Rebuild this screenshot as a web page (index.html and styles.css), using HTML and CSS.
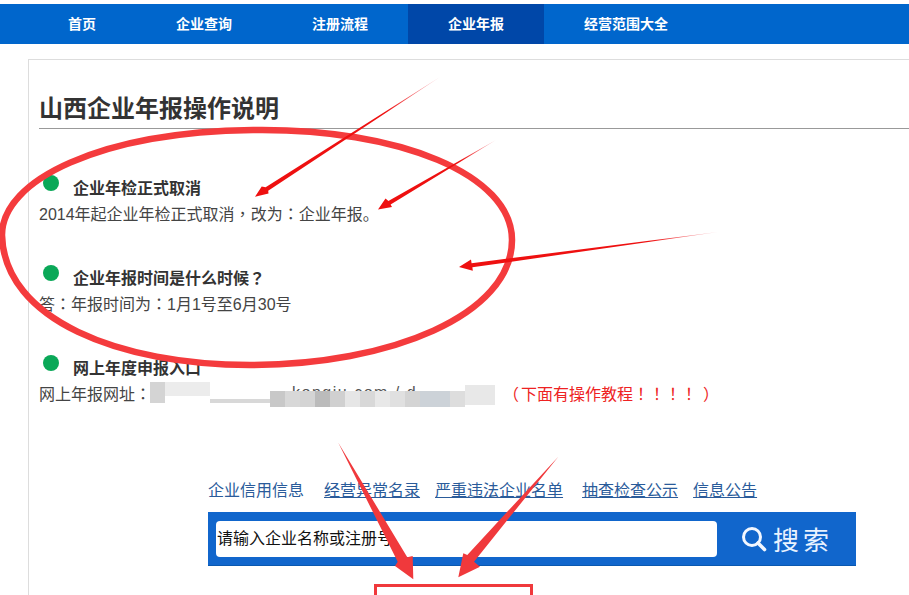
FILE: index.html
```
<!DOCTYPE html>
<html lang="zh-CN">
<head>
<meta charset="utf-8">
<title>山西企业年报操作说明</title>
<link rel="stylesheet" href="styles.css">
</head>
<body>
<div class="page">
  <nav class="nav">
    <a class="nav-item">首页</a>
    <a class="nav-item">企业查询</a>
    <a class="nav-item">注册流程</a>
    <a class="nav-item active">企业年报</a>
    <a class="nav-item">经营范围大全</a>
  </nav>
  <main class="card">
    <h1 class="title">山西企业年报操作说明</h1>
    <section class="item">
      <div class="item-head"><i class="dot"></i><h2>企业年检正式取消</h2></div>
      <p class="line">2014年起企业年检正式取消<span class="tc" lang="zh-TW">，</span>改为<span class="tc" lang="zh-TW">：</span>企业年报。</p>
    </section>
    <section class="item">
      <div class="item-head"><i class="dot"></i><h2>企业年报时间是什么时候<span class="tc" lang="zh-TW">？</span></h2></div>
      <p class="line">答<span class="tc" lang="zh-TW">：</span>年报时间为<span class="tc" lang="zh-TW">：</span>1月1号至6月30号</p>
    </section>
    <section class="item">
      <div class="item-head"><i class="dot"></i><h2>网上年度申报入口</h2></div>
      <p class="line url-line"><span>网上年报网址<span class="tc" lang="zh-TW">：</span></span><span class="mosaic"><span class="frag">kongiu.com / d</span><span class="tiles"><b class="t1"></b><b class="t2"></b><b class="t3"></b><b class="t4"></b><b class="t5"></b><b class="t6"></b><b class="t7"></b><b class="t8"></b><b class="t9"></b><b class="t10"></b><b class="t11"></b><b class="t12"></b><b class="t13"></b><b class="t14"></b><b class="t15"></b><b class="t16"></b></span></span><span class="warn"><span class="open">（</span>下面有操作教程<span class="tc" lang="zh-TW">！！！！</span><span class="close">）</span></span></p>
    </section>
    <div class="links">
      <a class="plain">企业信用信息</a>
      <a class="second">经营异常名录</a>
      <a class="third">严重违法企业名单</a>
      <a>抽查检查公示</a>
      <a>信息公告</a>
    </div>
    <div class="search">
      <div class="search-input">请输入企业名称或注册号</div>
      <div class="search-btn">
        <svg class="search-icon" width="26" height="26" viewBox="0 0 26 26" aria-hidden="true"><circle cx="11" cy="11" r="8.5" fill="none" stroke="#f2f7ff" stroke-width="3"/><path d="M17 17L23.5 23.5" stroke="#f2f7ff" stroke-width="3.6" stroke-linecap="round"/></svg>
        <span>搜索</span>
      </div>
    </div>
  </main>
  <svg class="marks" width="909" height="595" viewBox="0 0 909 595" aria-hidden="true">
    <defs>
      <linearGradient id="g1" gradientUnits="userSpaceOnUse" x1="440" y1="77" x2="385" y2="112"><stop offset="0" stop-color="#f8b8c0"/><stop offset="1" stop-color="#ee1010"/></linearGradient>
      <linearGradient id="g2" gradientUnits="userSpaceOnUse" x1="496" y1="140" x2="460" y2="161"><stop offset="0" stop-color="#f8b8c0"/><stop offset="1" stop-color="#ee1010"/></linearGradient>
      <linearGradient id="g3" gradientUnits="userSpaceOnUse" x1="718" y1="232" x2="650" y2="241"><stop offset="0" stop-color="#f8b8c0"/><stop offset="1" stop-color="#ee1010"/></linearGradient>
    </defs>
    <path class="ring" d="M253 130C400 128 512 175 512 240C512 315 390 365 250 365C120 365 4 320 2 235C2 180 100 132 253 130Z"/>
    <polygon fill="url(#g1)" points="440,77 268.2,190.7 268.5,193.5 255,196.7 261.7,186.5 265.6,187.3"/>
    <polygon fill="url(#g2)" points="496,140 390.6,204.4 392,207.1 378,209.5 385.5,198.5 388.4,200.9"/>
    <polygon fill="url(#g3)" points="718,232 472.4,267.3 472.8,270.7 459,267 471,259.5 471.6,263.2"/>
    <polygon class="big" points="338.3,442.7 407.3,557.3 412.7,556 413.3,579.3 395,566 397.7,561.7"/>
    <polygon class="big" points="558.3,456.7 474,561.7 480,566.7 458.3,577.3 463.3,553.3 467.3,555"/>
    <rect class="box" x="375.5" y="585.5" width="156" height="20"/>
  </svg>
</div>
</body>
</html>
```

FILE: styles.css
```
html, body {
  margin: 0;
  padding: 0;
  background: #fff;
}

body {
  font-family: "Liberation Sans", "Noto Sans CJK SC", sans-serif;
  font-size: 16px;
  color: #333;
}

.page {
  position: relative;
  width: 909px;
  height: 595px;
  padding-top: 4px;
  box-sizing: border-box;
  overflow: hidden;
}

.nav {
  display: flex;
  height: 40px;
  padding-left: 28px;
  background: #0066cc;
}

.nav-item {
  padding: 0 40px;
  line-height: 40px;
  font-size: 14px;
  font-weight: 700;
  color: #fff;
}

.nav-item.active {
  background: #0047a8;
}

.card {
  min-height: 540px;
  margin: 15px 0 0 28px;
  padding: 30px 0 0 10px;
  border-top: 1px solid #ddd;
  border-left: 1px solid #ddd;
}

.title {
  margin: 0 0 46px;
  font-size: 24px;
  line-height: 38px;
  font-weight: 700;
  color: #333;
  border-bottom: 1px solid #999;
}

.item {
  padding-bottom: 37px;
}

.item-head {
  display: flex;
}

.dot {
  flex: none;
  width: 16px;
  height: 16px;
  margin: 0 14px 0 4px;
  border-radius: 50%;
  background: #0aa858;
}

.item-head h2 {
  margin: 0;
  padding-top: 1px;
  font-size: 16px;
  line-height: 26px;
  font-weight: 700;
  color: #333;
}

.line {
  margin: 0;
  line-height: 26px;
  color: #444;
}

.url-line {
  display: flex;
  align-items: center;
}

.tc {
  font-family: "Noto Sans CJK TC", sans-serif;
  line-height: 0;
}

.mosaic {
  position: relative;
  flex: none;
  width: 345px;
  height: 26px;
  margin-left: -1px;
  overflow: hidden;
}

.frag {
  display: block;
  padding-left: 142px;
  font-size: 16px;
  line-height: 22px;
  letter-spacing: 1.5px;
  white-space: nowrap;
  color: #555;
}

.tiles {
  position: absolute;
  left: 0;
  top: 0;
  width: 345px;
  height: 26px;
  display: flex;
  align-items: flex-start;
}

.tiles b {
  display: block;
  flex: none;
  width: 15px;
  height: 16px;
  margin-top: 9px;
  filter: blur(0.6px);
}

.tiles .t1 { height: 21px; margin-top: 0; background: #d4d4d4; }
.tiles .t2 { width: 45px; height: 14px; margin-top: 0; background: #ececec; }
.tiles .t3 { width: 60px; height: 4px; margin-top: 17px; background: #d8d8d8; }
.tiles .t4 { background: #c8c8c8; }
.tiles .t5 { background: #d8d8d8; }
.tiles .t6 { background: #d4d4d4; }
.tiles .t7 { background: #bbbbbb; }
.tiles .t8 { background: #d0d0d0; }
.tiles .t9 { background: #e6e6e6; }
.tiles .t10 { background: #d8d8d8; }
.tiles .t11 { background: #e8e8e8; }
.tiles .t12 { background: #e0e0e0; }
.tiles .t13 { background: #d4d4d4; }
.tiles .t14 { width: 30px; background: #ccd2d8; }
.tiles .t15 { background: #dddddd; }
.tiles .t16 { width: 30px; height: 20px; margin-top: 3px; background: #e8e8e8; }

.warn {
  margin-left: 10px;
  white-space: nowrap;
  color: #ee2222;
}

.warn .open {
  margin-left: -2px;
  margin-right: 2px;
}

.warn .close {
  margin-left: 6px;
}

.links {
  display: flex;
  gap: 15px;
  margin: 34px 0 0 169px;
  line-height: 24px;
  color: #2a5b9a;
}

.links a {
  text-decoration: underline;
}

.links .plain {
  margin-right: 5px;
  text-decoration: none;
}

.links .third {
  padding-right: 4px;
}

.search {
  display: flex;
  align-items: center;
  box-sizing: border-box;
  width: 648px;
  height: 54px;
  margin: 9px 0 0 169px;
  padding-left: 8px;
  background: #1166cc;
  border-bottom: 1px solid #0a58b0;
}

.search-input {
  box-sizing: border-box;
  width: 501px;
  height: 36px;
  margin-top: 1px;
  padding-left: 1px;
  line-height: 36px;
  color: #111;
  background: #fff;
  border-radius: 4px;
}

.search-btn {
  display: flex;
  align-items: center;
  gap: 6px;
  margin-left: 24px;
  font-size: 26px;
  letter-spacing: 4px;
  color: #e8f2ff;
}

.search-icon {
  flex: none;
}

.marks {
  position: absolute;
  left: 0;
  top: 0;
  pointer-events: none;
}

.ring {
  fill: none;
  stroke: #f43b3d;
  stroke-width: 6.5;
}

.big {
  fill: #f0393c;
}

.box {
  fill: none;
  stroke: #f0393c;
  stroke-width: 3;
}
```
